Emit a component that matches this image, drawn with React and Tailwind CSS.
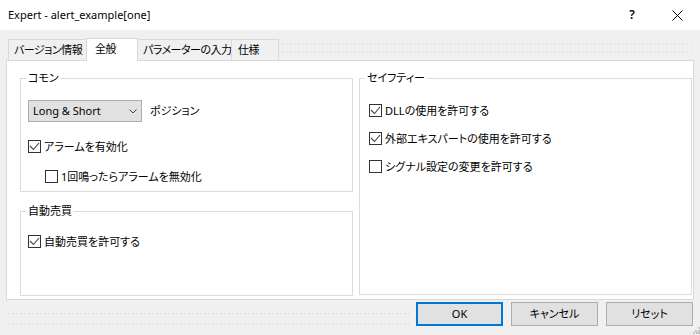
import React from 'react';

const font = "font-['Noto_Sans','Noto_Sans_CJK_JP',sans-serif] [font-feature-settings:'palt']";
const dots = 'h-px bg-[repeating-linear-gradient(90deg,#d2d2d2_0_1px,transparent_1px_4px)]';

const Check = ({ checked }) => (
    <span className="w-[13px] h-[13px] border border-[#333333] bg-white flex items-center justify-center shrink-0">
        {checked && (
            <svg width="11" height="11" viewBox="0 0 11 11">
                <path d="M1 5 L4.5 8.5 L10 2" fill="none" stroke="#444444" strokeWidth="1.1" />
            </svg>
        )}
    </span>
);

const CheckRow = ({ checked, label, className = '' }) => (
    <div className={`flex items-center h-[13px] gap-[3px] ${className}`}>
        <Check checked={checked} />
        <span className="text-[11px] leading-[16px] whitespace-nowrap">{label}</span>
    </div>
);

const Group = ({ title, className, children, inner }) => (
    <fieldset className={`border border-[#dcdcdc] ${className}`}>
        <legend className="ml-[5px] px-[2px] text-[11px] leading-[16px]">{title}</legend>
        <div className={inner}>{children}</div>
    </fieldset>
);

const Tab = ({ label, active, className }) => (
    <div
        className={`flex items-center border border-b-0 border-[#d9d9d9] text-[11px] tracking-[-0.5px] whitespace-nowrap ${
            active ? 'relative z-10 h-[23px] -mb-px bg-white pb-[2px]' : 'h-[21px] bg-[#f0f0f0]'
        } ${className}`}
    >
        {label}
    </div>
);

const Button = ({ label, primary }) => (
    <div
        className={`w-[87px] h-[24px] flex items-center justify-center bg-[#e1e1e1] text-[11px] ${
            primary ? 'border-2 border-[#0078d7]' : 'border border-[#adadad]'
        }`}
    >
        {label}
    </div>
);

export default function App() {
    return (
        <div className={`w-[700px] h-[335px] bg-[#f0f0f0] flex flex-col overflow-hidden text-black ${font}`}>
            {/* title bar */}
            <div className="h-[30px] bg-white flex items-center shrink-0">
                <span className="pl-[8px] text-[11px] flex-1">Expert - alert_example[one]</span>
                <div className="w-[44px] flex justify-center text-[12px] font-semibold">?</div>
                <div className="w-[46px] flex justify-center">
                    <svg width="11" height="11" viewBox="0 0 11 11">
                        <path d="M0.5 0.5 L10.5 10.5 M10.5 0.5 L0.5 10.5" stroke="#000" strokeWidth="1" />
                    </svg>
                </div>
            </div>

            {/* tabs */}
            <div className="h-[30px] flex items-end pl-[8px] shrink-0">
                <Tab label="バージョン情報" className="w-[79px] pl-[5px]" />
                <Tab label="全般" active className="w-[52px] -ml-px pl-[8px]" />
                <Tab label="パラメーターの入力" className="w-[95px] -ml-px pl-[5px]" />
                <Tab label="仕様" className="w-[48px] -ml-px pl-[6px]" />
                <div className="flex-1 self-stretch pl-[4px] pr-[6px] flex flex-col">
                    <div className={`mt-[13px] ${dots}`} />
                    <div className={`mt-[8px] ${dots}`} />
                </div>
            </div>

            {/* panel */}
            <div className="ml-[6px] w-[688px] h-[240px] shrink-0 bg-white border border-[#d9d9d9] pt-[9px] pl-[13px] pr-[1px] flex gap-[6px]">
                <div className="w-[333px] flex flex-col">
                    <Group title="コモン" className="h-[122px]" inner="pl-[7px]">
                        <div className="mt-[14px] flex items-center">
                            <div className="w-[114px] h-[22px] bg-[#e1e1e1] border border-[#adadad] flex items-center pl-[4px] pr-[4px] text-[11px]">
                                <span className="flex-1">Long &amp; Short</span>
                                <svg width="8" height="5" viewBox="0 0 8 5">
                                    <path d="M0.5 0.5 L4 4 L7.5 0.5" fill="none" stroke="#444" strokeWidth="1" />
                                </svg>
                            </div>
                            <span className="ml-[8px] text-[11px]">ポジション</span>
                        </div>
                        <CheckRow checked label="アラームを有効化" className="mt-[18px]" />
                        <CheckRow label="1回鳴ったらアラームを無効化" className="mt-[17px] ml-[17px]" />
                    </Group>
                    <Group title="自動売買" className="mt-[11px] h-[93px]" inner="pl-[7px]">
                        <CheckRow checked label="自動売買を許可する" className="mt-[16px]" />
                    </Group>
                </div>
                <Group title="セイフティー" className="w-[333px] h-[225px]" inner="pl-[9px]">
                    <CheckRow checked label="DLLの使用を許可する" className="mt-[18px]" />
                    <CheckRow checked label="外部エキスパートの使用を許可する" className="mt-[15px]" />
                    <CheckRow label="シグナル設定の変更を許可する" className="mt-[15px]" />
                </Group>
            </div>

            {/* bottom buttons */}
            <div className="flex-1 flex">
                <div className="flex-1 pl-[8px] pr-[6px] flex flex-col">
                    <div className={`mt-[13px] ${dots}`} />
                    <div className={`mt-[9px] ${dots}`} />
                </div>
                <div className="mt-[2px] flex gap-[8px]">
                    <Button label="OK" primary />
                    <Button label="キャンセル" />
                    <Button label="リセット" />
                </div>
                <div className="w-[7px] self-end pb-[1px] flex justify-end">
                    <svg width="7" height="7" viewBox="0 0 7 7">
                        <rect x="5" y="0" width="2" height="2" fill="#c4c4c4" />
                        <rect x="2" y="3" width="2" height="2" fill="#c4c4c4" />
                        <rect x="5" y="3" width="2" height="2" fill="#c4c4c4" />
                        <rect x="0" y="5" width="2" height="2" fill="#c4c4c4" />
                        <rect x="3" y="5" width="2" height="2" fill="#c4c4c4" />
                        <rect x="5" y="5" width="2" height="2" fill="#c4c4c4" />
                    </svg>
                </div>
            </div>
        </div>
    );
}
